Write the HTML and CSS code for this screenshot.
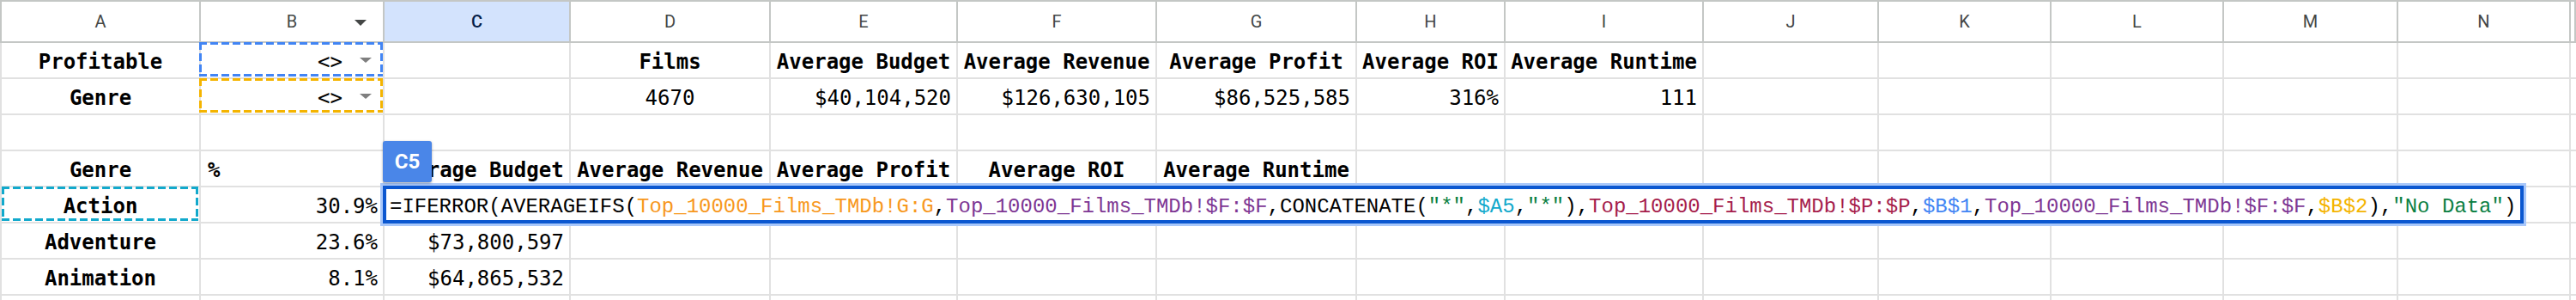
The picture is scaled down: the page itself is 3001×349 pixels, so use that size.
FILE: index.html
```html
<!DOCTYPE html>
<html>
<head>
  <title>Top 10000 Films – Genre summary</title>
  <link rel="stylesheet" href="styles.css">
</head>
<body>
  <div class="sheet">
    <div class="row head">
      <div class="cell">A</div>
      <div class="cell">B<span class="filter"></span></div>
      <div class="cell sel">C</div>
      <div class="cell">D</div>
      <div class="cell">E</div>
      <div class="cell">F</div>
      <div class="cell">G</div>
      <div class="cell">H</div>
      <div class="cell">I</div>
      <div class="cell">J</div>
      <div class="cell">K</div>
      <div class="cell">L</div>
      <div class="cell">M</div>
      <div class="cell">N</div>
      <div class="cell"></div>
    </div>

    <div class="row">
      <div class="cell b c">Profitable</div>
      <div class="cell chip marquee blue">&lt;&gt;<span class="caret"></span></div>
      <div class="cell"></div>
      <div class="cell b c">Films</div>
      <div class="cell b c">Average Budget</div>
      <div class="cell b c">Average Revenue</div>
      <div class="cell b c">Average Profit</div>
      <div class="cell b c">Average ROI</div>
      <div class="cell b c">Average Runtime</div>
      <div class="cell"></div><div class="cell"></div><div class="cell"></div>
      <div class="cell"></div><div class="cell"></div><div class="cell"></div>
    </div>

    <div class="row">
      <div class="cell b c">Genre</div>
      <div class="cell chip marquee amber">&lt;&gt;<span class="caret"></span></div>
      <div class="cell"></div>
      <div class="cell c">4670</div>
      <div class="cell r">$40,104,520</div>
      <div class="cell r">$126,630,105</div>
      <div class="cell r">$86,525,585</div>
      <div class="cell r">316%</div>
      <div class="cell r">111</div>
      <div class="cell"></div><div class="cell"></div><div class="cell"></div>
      <div class="cell"></div><div class="cell"></div><div class="cell"></div>
    </div>

    <div class="row">
      <div class="cell"></div><div class="cell"></div><div class="cell"></div>
      <div class="cell"></div><div class="cell"></div><div class="cell"></div>
      <div class="cell"></div><div class="cell"></div><div class="cell"></div>
      <div class="cell"></div><div class="cell"></div><div class="cell"></div>
      <div class="cell"></div><div class="cell"></div><div class="cell"></div>
    </div>

    <div class="row">
      <div class="cell b c">Genre</div>
      <div class="cell b l">%</div>
      <div class="cell b c">Average Budget</div>
      <div class="cell b c">Average Revenue</div>
      <div class="cell b c">Average Profit</div>
      <div class="cell b c">Average ROI</div>
      <div class="cell b c">Average Runtime</div>
      <div class="cell"></div><div class="cell"></div><div class="cell"></div><div class="cell"></div>
      <div class="cell"></div><div class="cell"></div><div class="cell"></div><div class="cell"></div>
    </div>

    <div class="row">
      <div class="cell b c marquee cyan">Action</div>
      <div class="cell r">30.9%</div>
      <div class="cell active">
        <div class="ref-tag">C5</div>
        <div class="editor">=IFERROR(AVERAGEIFS(<span class="r1">Top_10000_Films_TMDb!G:G</span>,<span class="r2">Top_10000_Films_TMDb!$F:$F</span>,CONCATENATE(<span class="str">"*"</span>,<span class="r3">$A5</span>,<span class="str">"*"</span>),<span class="r4">Top_10000_Films_TMDb!$P:$P</span>,<span class="r5">$B$1</span>,<span class="r2">Top_10000_Films_TMDb!$F:$F</span>,<span class="r6">$B$2</span>),<span class="str">"No Data"</span>)</div>
      </div>
      <div class="cell"></div><div class="cell"></div><div class="cell"></div><div class="cell"></div>
      <div class="cell"></div><div class="cell"></div><div class="cell"></div><div class="cell"></div>
      <div class="cell"></div><div class="cell"></div><div class="cell"></div><div class="cell"></div>
    </div>

    <div class="row">
      <div class="cell b c">Adventure</div>
      <div class="cell r">23.6%</div>
      <div class="cell r">$73,800,597</div>
      <div class="cell"></div><div class="cell"></div><div class="cell"></div><div class="cell"></div>
      <div class="cell"></div><div class="cell"></div><div class="cell"></div><div class="cell"></div>
      <div class="cell"></div><div class="cell"></div><div class="cell"></div><div class="cell"></div>
    </div>

    <div class="row">
      <div class="cell b c">Animation</div>
      <div class="cell r">8.1%</div>
      <div class="cell r">$64,865,532</div>
      <div class="cell"></div><div class="cell"></div><div class="cell"></div><div class="cell"></div>
      <div class="cell"></div><div class="cell"></div><div class="cell"></div><div class="cell"></div>
      <div class="cell"></div><div class="cell"></div><div class="cell"></div><div class="cell"></div>
    </div>

    <div class="row">
      <div class="cell"></div><div class="cell"></div><div class="cell"></div>
      <div class="cell"></div><div class="cell"></div><div class="cell"></div>
      <div class="cell"></div><div class="cell"></div><div class="cell"></div>
      <div class="cell"></div><div class="cell"></div><div class="cell"></div>
      <div class="cell"></div><div class="cell"></div><div class="cell"></div>
    </div>
  </div>
</body>
</html>
```

FILE: styles.css
```css
body {
  margin: 0;
  width: 3001px;
  height: 349px;
  overflow: hidden;
  background: #fff;
  font-family: "DejaVu Sans Mono", "Liberation Mono", monospace;
  font-size: 24px;
  color: #000;
}

.sheet {
  --cols: 234px 214px 217px 233px 218px 232px 233px 173px 231px 204px 201px 201px 203px 201px 1fr;
  height: 349px;
  overflow: hidden;
}

.row {
  display: grid;
  grid-template-columns: var(--cols);
  height: 42px;
}

.cell {
  box-sizing: border-box;
  display: flex;
  align-items: flex-end;
  padding: 0 6px 4px;
  border-right: 2px solid #e1e1e1;
  border-bottom: 2px solid #e1e1e1;
  white-space: nowrap;
  min-width: 0;
}
.cell:first-child {
  border-left: 2px solid #e1e1e1;
}

/* column letters */
.head {
  height: 50px;
  border-top: 2px solid #c4c7c5;
  box-sizing: border-box;
}
.head .cell {
  position: relative;
  align-items: center;
  justify-content: center;
  padding: 0;
  border-color: #c4c7c5;
  font-family: Roboto, "Noto Sans", sans-serif;
  font-size: 20px;
  color: #444746;
}
.head .sel {
  background: #d3e3fd;
  color: #041e49;
  font-weight: 500;
}
.filter {
  position: absolute;
  right: 19px;
  top: 21px;
  border-left: 7.5px solid transparent;
  border-right: 7.5px solid transparent;
  border-top: 7px solid #444746;
}

.b { font-weight: bold; }
.c { justify-content: center; }
.r { justify-content: flex-end; }
.l { justify-content: flex-start; padding-left: 8px; }

/* dropdown chips in B1:B2 */
.chip {
  justify-content: flex-end;
  gap: 20px;
  padding-right: 13px;
}
.caret {
  align-self: center;
  margin-top: 4px;
  border-left: 7.5px solid transparent;
  border-right: 7.5px solid transparent;
  border-top: 6px solid #7f7f7f;
}

/* dashed range highlights */
.marquee {
  position: relative;
  --dash: 9px;
  --gap: 4px;
  --w: 3px;
}
.marquee::after {
  content: "";
  position: absolute;
  top: -1px;
  bottom: 1px;
  left: -2px;
  right: -2px;
  pointer-events: none;
  background:
    repeating-linear-gradient(90deg, var(--mc) 0 var(--dash), transparent var(--dash) calc(var(--dash) + var(--gap))) top left / 100% var(--w) no-repeat,
    repeating-linear-gradient(90deg, var(--mc) 0 var(--dash), transparent var(--dash) calc(var(--dash) + var(--gap))) bottom left / 100% var(--w) no-repeat,
    repeating-linear-gradient(180deg, var(--mc) 0 var(--dash), transparent var(--dash) calc(var(--dash) + var(--gap))) top left / var(--w) 100% no-repeat,
    repeating-linear-gradient(180deg, var(--mc) 0 var(--dash), transparent var(--dash) calc(var(--dash) + var(--gap))) top right / var(--w) 100% no-repeat;
}
.marquee.blue { --mc: #4285f4; }
.marquee.amber { --mc: #f4b400; }
.marquee.cyan { --mc: #12a9cc; }
.marquee.blue::after,
.marquee.amber::after { right: 0; }
.marquee.cyan::after { left: 0; right: 1px; }

/* active cell with open formula editor */
.active {
  position: relative;
}
.ref-tag {
  position: absolute;
  left: -2px;
  top: -54px;
  width: 57px;
  height: 48px;
  display: flex;
  align-items: center;
  justify-content: center;
  background: #4a86e8;
  color: #fff;
  font-family: Roboto, "Noto Sans", sans-serif;
  font-weight: bold;
  font-size: 24px;
  border-radius: 3px;
  box-shadow: 0 1px 3px rgba(0, 0, 0, 0.35);
  z-index: 3;
}
.editor {
  position: absolute;
  left: -2px;
  top: -2px;
  width: 2494px;
  height: 44px;
  box-sizing: border-box;
  display: flex;
  align-items: flex-end;
  padding: 0 0 2px 4px;
  border: 4px solid #0b57d0;
  box-shadow: 0 0 0 3px #a8c7fa;
  background: #fff;
  font-family: "Liberation Mono", monospace;
  font-size: 24px;
  white-space: pre;
  z-index: 2;
}
.editor span { white-space: pre; }
.r1 { color: #f7981d; }
.r2 { color: #7e3794; }
.r3 { color: #11a9cc; }
.r4 { color: #a61d4c; }
.r5 { color: #4285f4; }
.r6 { color: #f4b400; }
.str { color: #0b8043; }
```
